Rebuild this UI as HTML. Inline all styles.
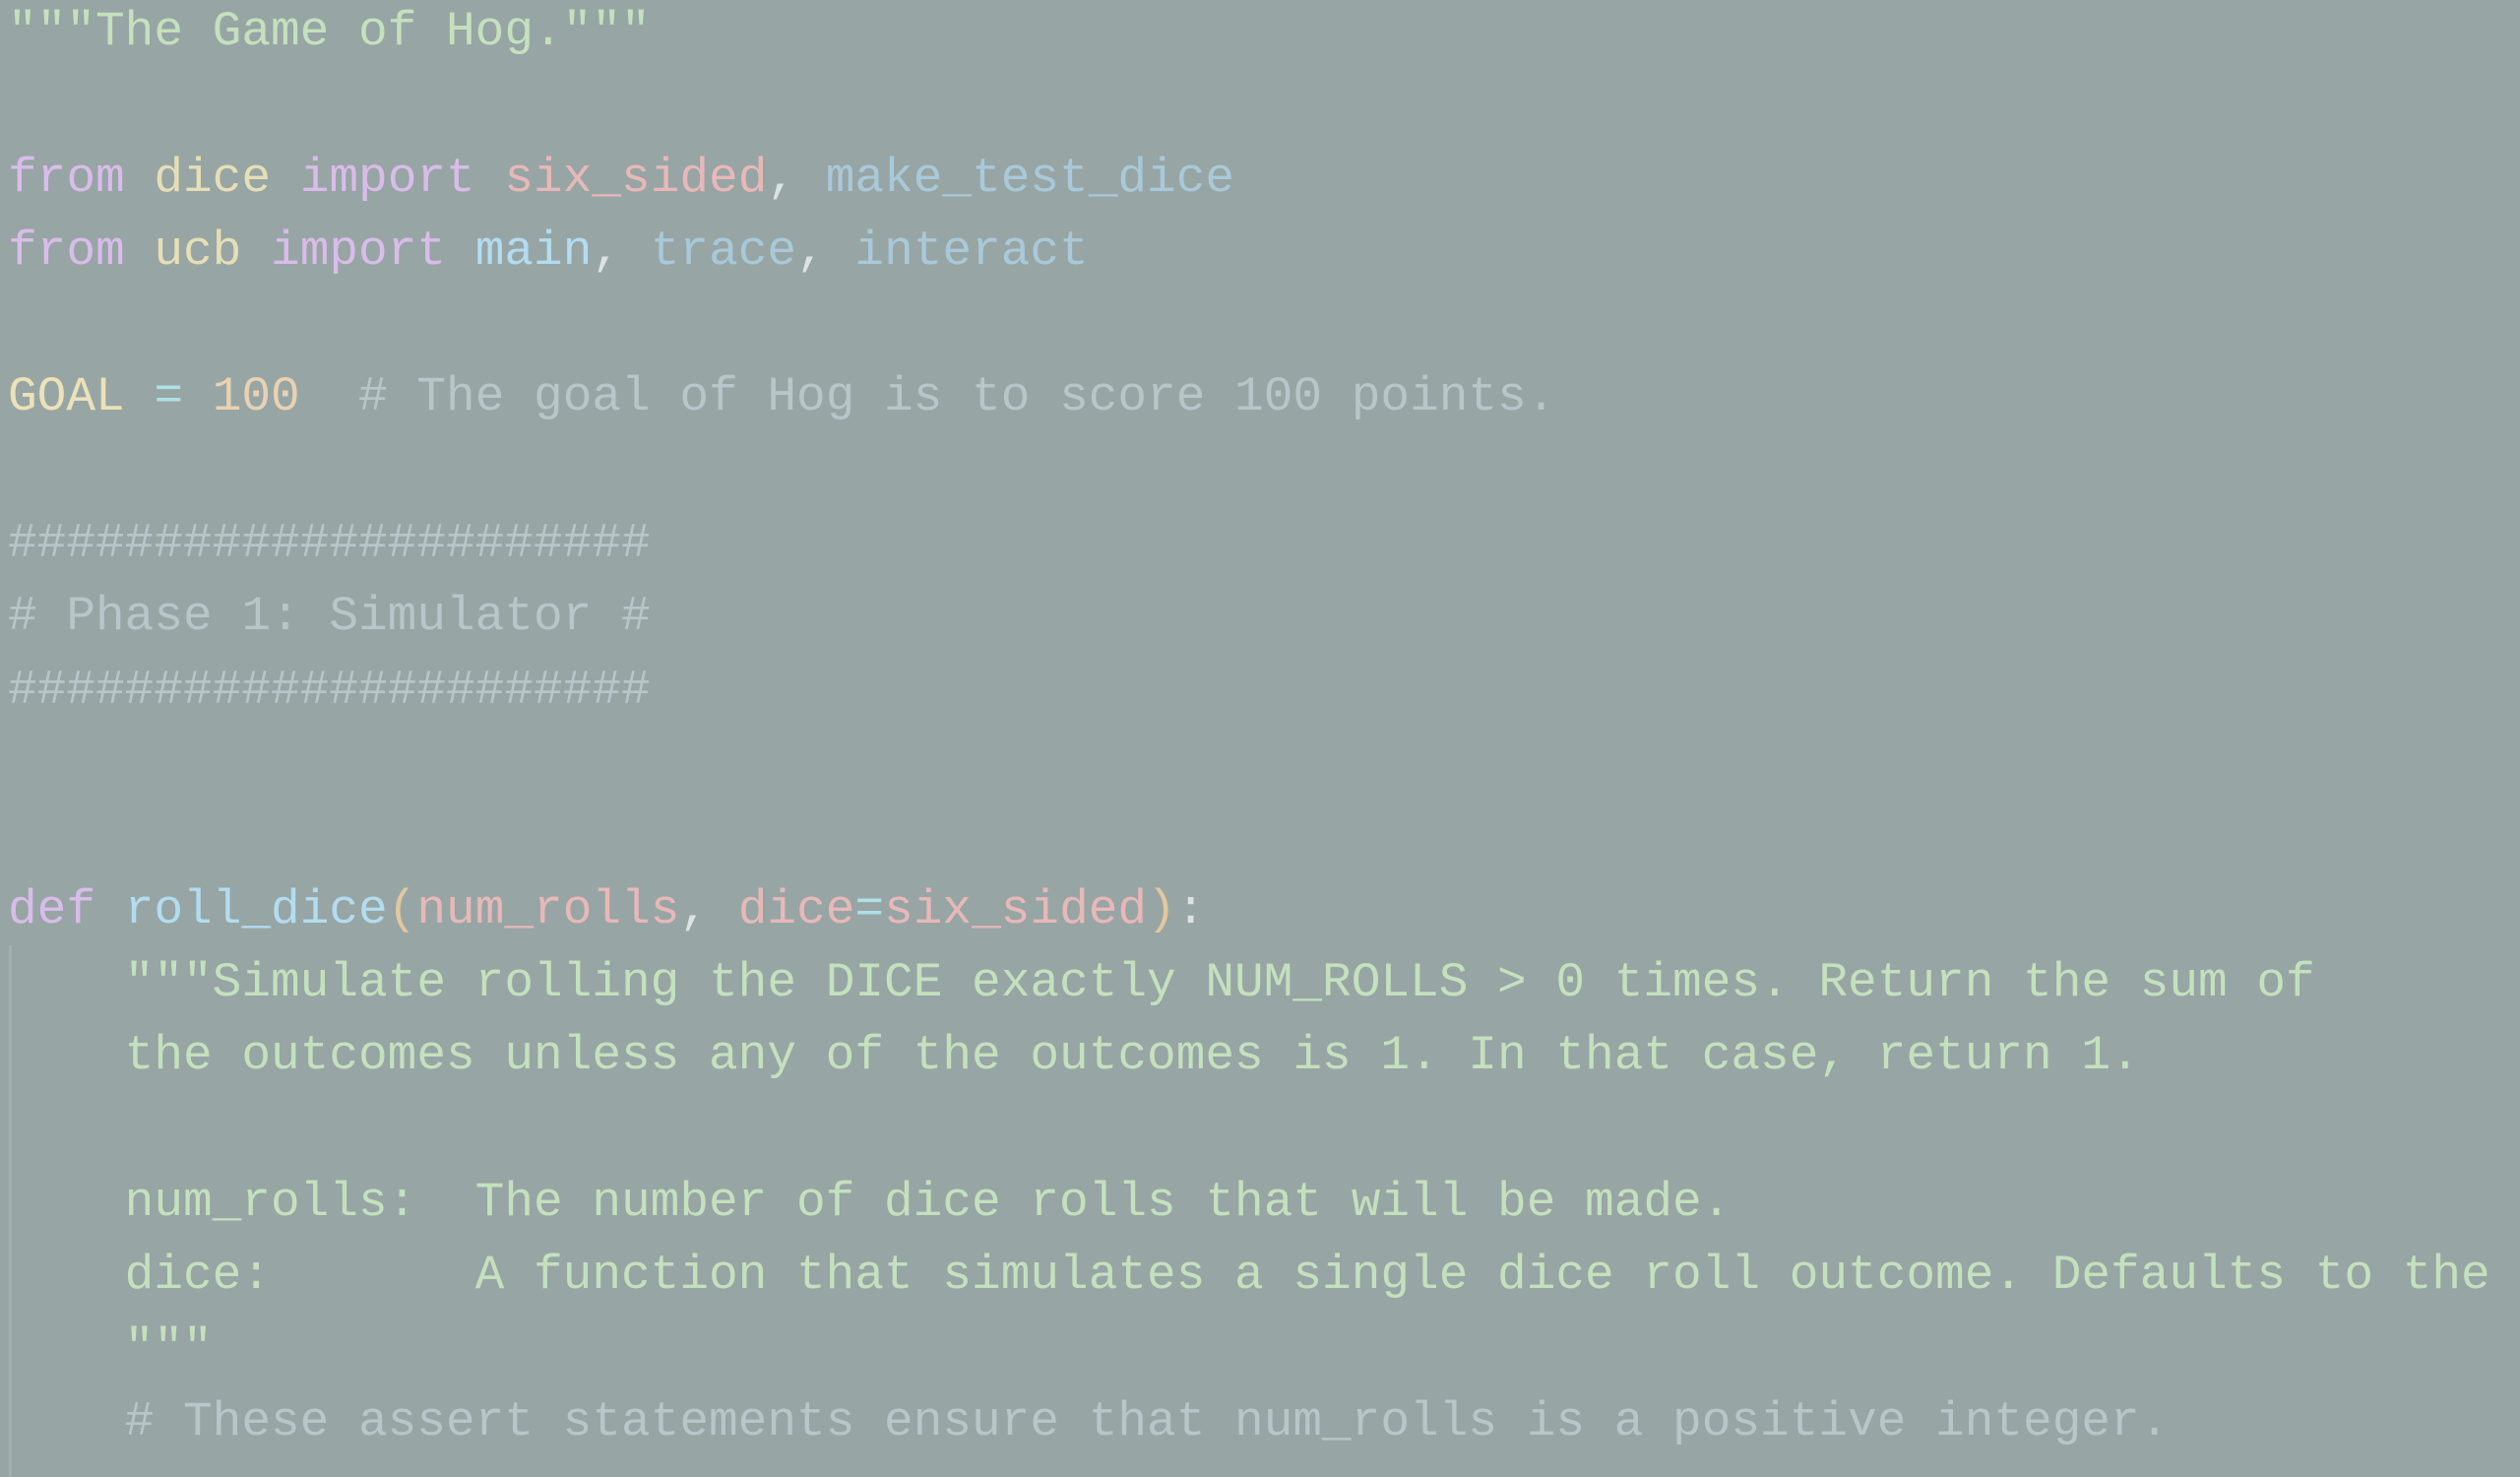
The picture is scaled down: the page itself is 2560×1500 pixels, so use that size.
<!DOCTYPE html>
<html><head><meta charset="utf-8"><style>
html,body{margin:0;padding:0;background:#97a5a5;width:2560px;height:1494px;overflow:hidden}
pre{margin:0;position:absolute;left:8px;top:-5px;font-family:"Liberation Mono",monospace;font-size:49.45px;line-height:74.3px;color:#c5e0bd;white-space:pre}
.guide{position:absolute;left:9px;top:960px;width:3px;height:540px;background:#a3b0b0}
.s{color:#c5e0bd}.k{color:#d9bce9}.m{color:#e6dfb5}.p{color:#e8b8b8}.b{color:#a9c9d9}.f{color:#b3dcf0}.c{color:#b7c6c8}.g{color:#ece1b8}.o{color:#aee0e6}.n{color:#e8d2b2}.w{color:#dde3e3}.y{color:#e3c79f}
</style></head><body>
<div class="guide"></div>
<pre><span class="s">"""The Game of Hog."""</span>

<span class="k">from</span> <span class="m">dice</span> <span class="k">import</span> <span class="p">six_sided</span><span class="w">,</span> <span class="b">make_test_dice</span>
<span class="k">from</span> <span class="m">ucb</span> <span class="k">import</span> <span class="f">main</span><span class="w">,</span> <span class="b">trace</span><span class="w">,</span> <span class="b">interact</span>

<span class="g">GOAL</span> <span class="o">=</span> <span class="n">100</span>  <span class="c"># The goal of Hog is to score 100 points.</span>

<span class="c">######################</span>
<span class="c"># Phase 1: Simulator #</span>
<span class="c">######################</span>


<span class="k">def</span> <span class="f">roll_dice</span><span class="y">(</span><span class="p">num_rolls</span><span class="w">,</span> <span class="p">dice</span><span class="o">=</span><span class="p">six_sided</span><span class="y">)</span><span class="w">:</span>
    <span class="s">"""Simulate rolling the DICE exactly NUM_ROLLS &gt; 0 times. Return the sum of</span>
<span class="s">    the outcomes unless any of the outcomes is 1. In that case, return 1.</span>

<span class="s">    num_rolls:  The number of dice rolls that will be made.</span>
<span class="s">    dice:       A function that simulates a single dice roll outcome. Defaults to the</span>
<span class="s">    """</span>
    <span class="c"># These assert statements ensure that num_rolls is a positive integer.</span>
</pre>
</body></html>
